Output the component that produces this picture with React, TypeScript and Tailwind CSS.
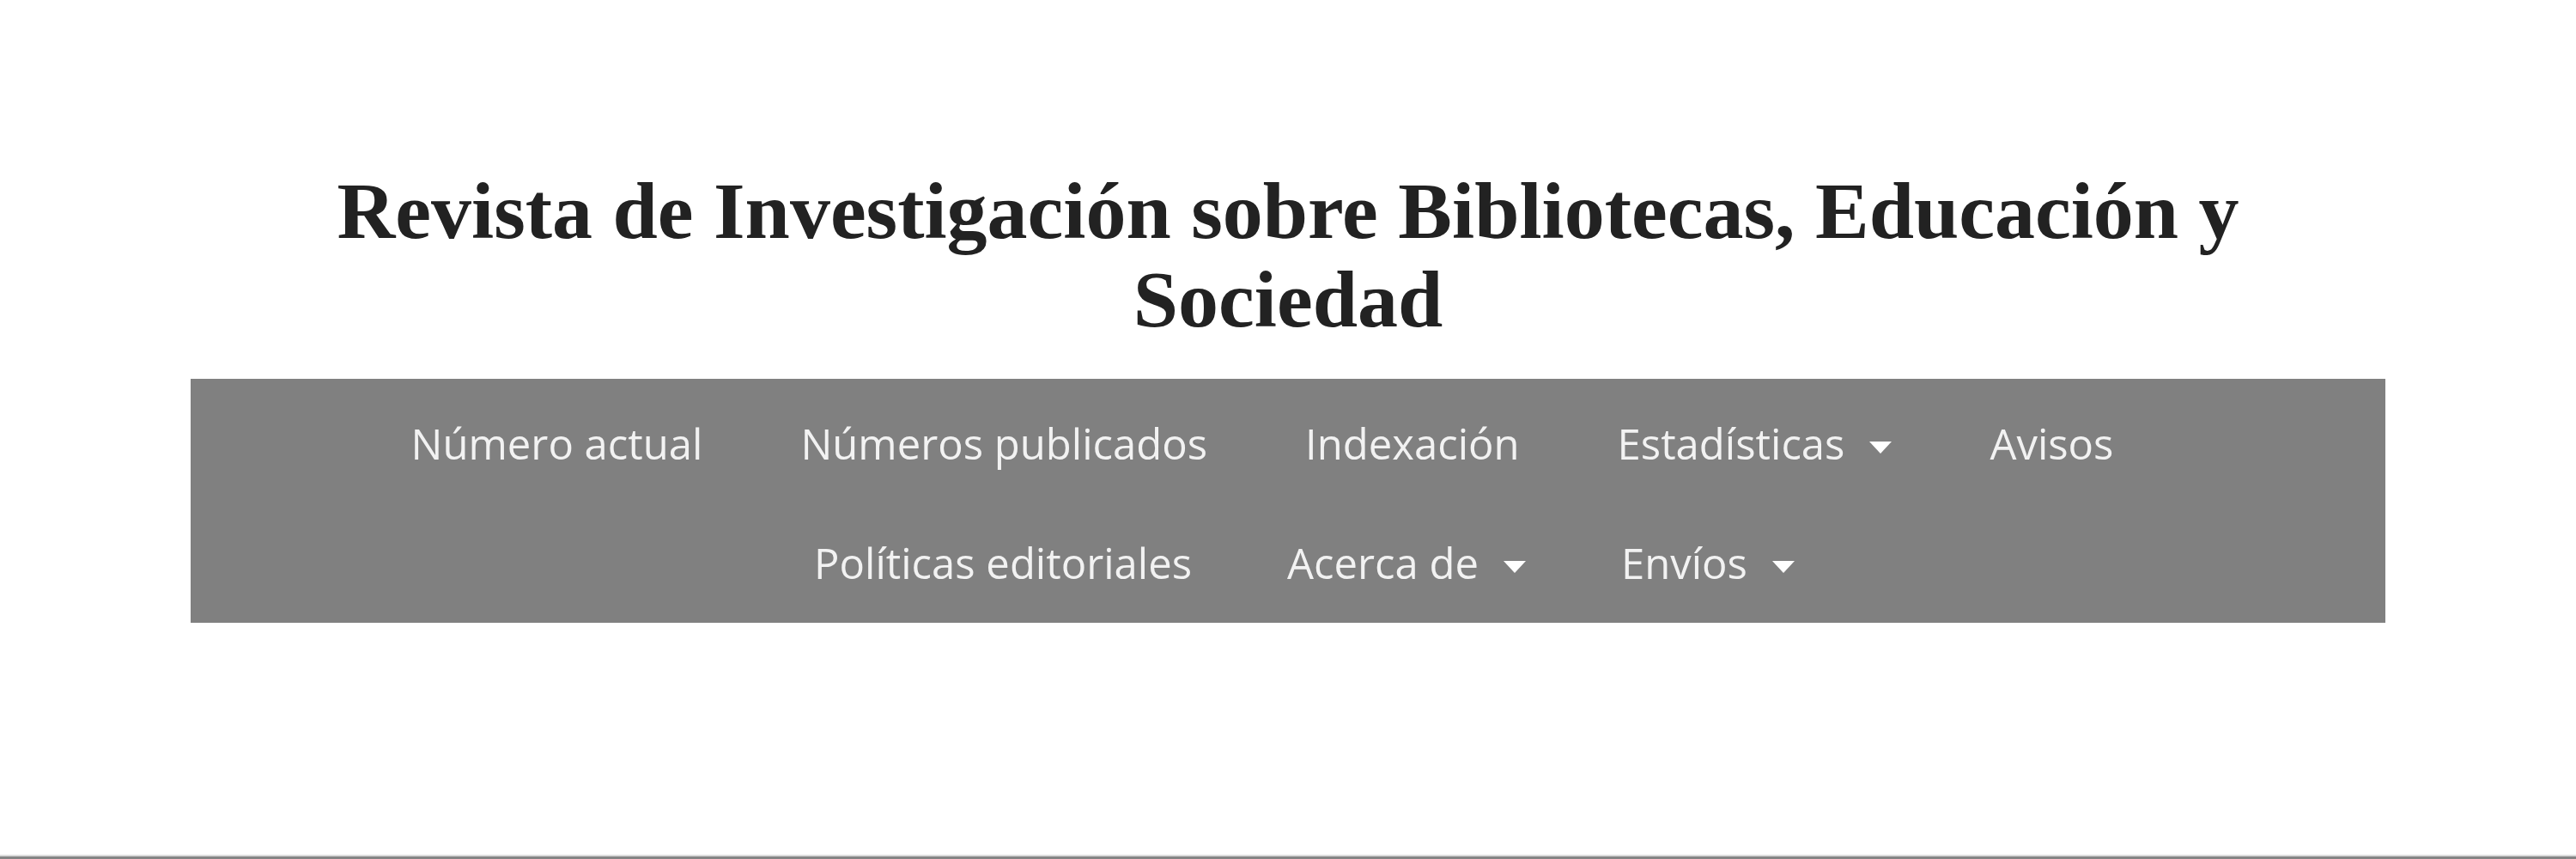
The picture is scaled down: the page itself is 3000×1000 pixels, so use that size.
import React from "react";

const Caret = () => (
  <span className="ml-[29px] mt-[8px] inline-block h-0 w-0 border-x-[13px] border-t-[14px] border-x-transparent border-t-white" />
);

function Item({ label, dd }: { label: string; dd?: boolean }) {
  return (
    <li className="flex h-[139px] items-center whitespace-nowrap">
      <a className="flex items-center">
        <span>{label}</span>
        {dd && <Caret />}
      </a>
    </li>
  );
}

export default function App() {
  return (
    <div className="flex h-[1000px] w-[3000px] flex-col bg-white">
      <div className="h-[995px]">
        <div className="mx-auto w-[2556px] pt-[194px]">
          <h1 className="text-center font-['Liberation_Serif',serif] text-[94px] font-bold leading-[103px] text-[#222222]">
            Revista de Investigación sobre Bibliotecas, Educación y Sociedad
          </h1>
          <nav className="mt-[41px] bg-[#808080] pt-[6px] font-['Open_Sans',sans-serif] text-[49px] text-[#f2f2f2]">
            <ul className="flex justify-center gap-[114px] pr-[60px]">
              <Item label="Número actual" />
              <Item label="Números publicados" />
              <Item label="Indexación" />
              <Item label="Estadísticas" dd />
              <Item label="Avisos" />
            </ul>
            <ul className="flex justify-center gap-[111px] pl-[38px]">
              <Item label="Políticas editoriales" />
              <Item label="Acerca de" dd />
              <Item label="Envíos" dd />
            </ul>
          </nav>
        </div>
      </div>
      <div className="h-[2px] bg-[#dcdcdc]" />
      <div className="h-[3px] bg-[#858585]" />
    </div>
  );
}
